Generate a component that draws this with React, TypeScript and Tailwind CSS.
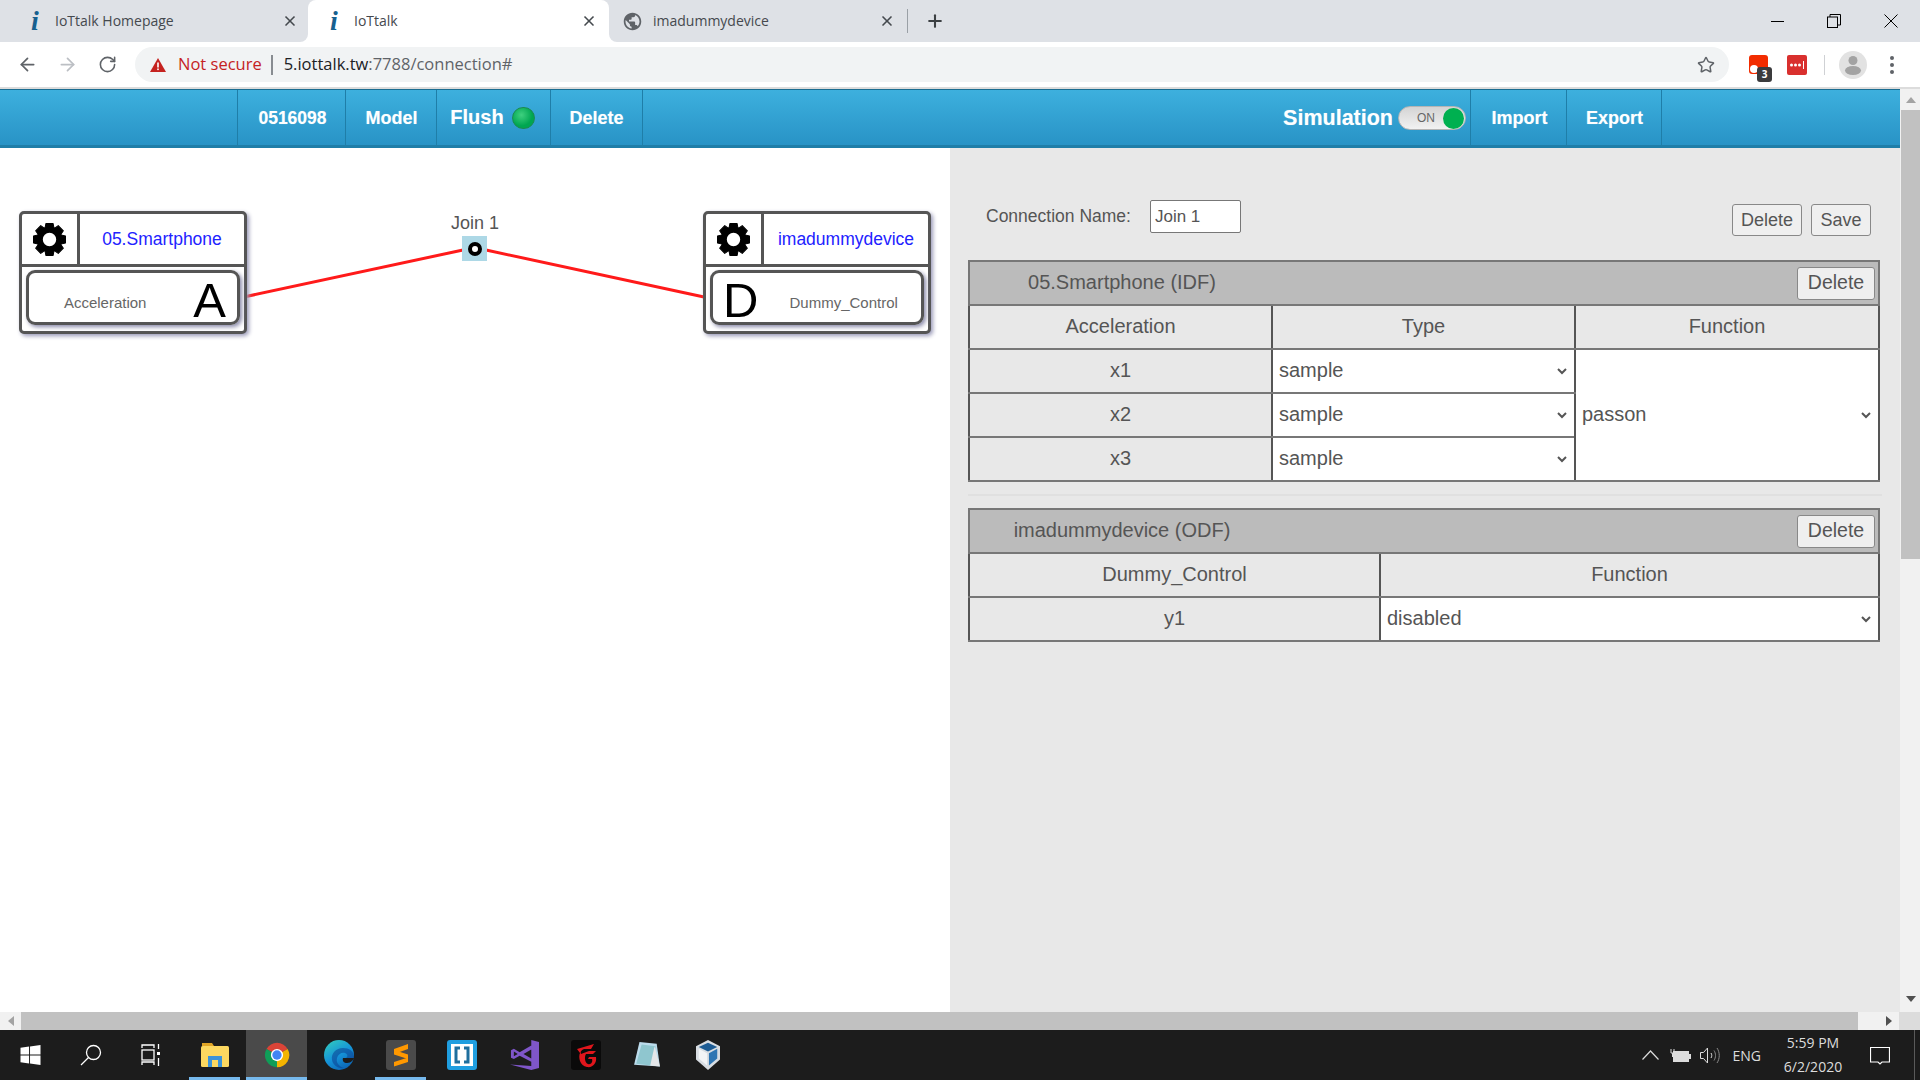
import React from 'react';
import { MdPublic } from 'react-icons/md';
import { ArrowLeft, ArrowRight, RotateCw, Star, X, Plus } from 'lucide-react';

const ChromeText = 'font-["Open_Sans",sans-serif]';

const TabFlare: React.FC<{ side: 'left' | 'right' }> = ({ side }) => (
  <span className={`absolute bottom-0 w-2 h-2 bg-white ${side === 'left' ? '-left-2' : '-right-2'}`}>
    <span className={`block w-2 h-2 bg-[#dee1e6] ${side === 'left' ? 'rounded-br-lg' : 'rounded-bl-lg'}`} />
  </span>
);

const InfoIcon: React.FC = () => (
  <span className='w-[22px] text-center font-["Liberation_Serif",serif] font-bold italic text-[28px] leading-none text-[#17608f] shrink-0'>i</span>
);

const GearIcon: React.FC = () => (
  <svg width="33" height="33" viewBox="0 0 32 32">
    {[0, 45, 90, 135, 180, 225, 270, 315].map((deg) => (
      <path key={deg} d="M12.5 0.5H19.5L20.5 6H11.5Z" fill="#000" stroke="#000" strokeLinejoin="round" transform={`rotate(${deg} 16 16)`} />
    ))}
    <circle cx="16" cy="16" r="9.5" fill="none" stroke="#000" strokeWidth="6" />
  </svg>
);

const TabBar: React.FC = () => (
  <div className={`${ChromeText} h-[42px] bg-[#dee1e6] flex items-stretch text-[14px] text-[#45494e] shrink-0`}>
    <div className="w-[308px] flex items-center pl-[24px] pr-[10px]">
      <InfoIcon />
      <span className="ml-[9px] flex-1 -mt-[1px]">IoTtalk Homepage</span>
      <X size={16} strokeWidth={2.5} className="text-[#45494e]" />
    </div>
    <div className="relative w-[301px] bg-white rounded-t-lg flex items-center pl-[15px] pr-[12px]">
      <TabFlare side="left" />
      <InfoIcon />
      <span className="ml-[9px] flex-1 -mt-[1px]">IoTtalk</span>
      <X size={16} strokeWidth={2.5} className="text-[#45494e]" />
      <TabFlare side="right" />
    </div>
    <div className="w-[298px] flex items-center pl-[12px] pr-[12px]">
      <span className="w-[22px] flex justify-center shrink-0">
        <MdPublic size={21} className="text-[#5f6368]" />
      </span>
      <span className="ml-[10px] flex-1 -mt-[1px]">imadummydevice</span>
      <X size={16} strokeWidth={2.5} className="text-[#45494e]" />
    </div>
    <div className="w-px h-[24px] self-center bg-[#9aa0a6]" />
    <div className="ml-[17px] flex items-center">
      <Plus size={20} strokeWidth={2.5} className="text-[#3c4043]" />
    </div>
    <div className="ml-auto flex items-center text-black">
      <div className="w-[56px] pr-[2px] flex justify-center">
        <div className="w-[13px] h-px bg-black" />
      </div>
      <div className="w-[56px] flex justify-center">
        <svg width="14" height="14" viewBox="0 0 14 14" fill="none" stroke="#000" strokeWidth="1">
          <rect x="0.5" y="3" width="10" height="10.5" />
          <path d="M3 3V0.5H13.5V11H10.5" />
        </svg>
      </div>
      <div className="w-[58px] pr-[1px] flex justify-center">
        <svg width="14" height="14" viewBox="0 0 14 14" stroke="#000" strokeWidth="1">
          <path d="M0.5 0.5L13.5 13.5M13.5 0.5L0.5 13.5" />
        </svg>
      </div>
    </div>
  </div>
);

const Toolbar: React.FC = () => (
  <div className={`${ChromeText} h-[47px] bg-white border-b-2 border-[#dcdcdc] flex items-center pl-[7px] shrink-0`}>
    <div className="w-[40px] flex justify-center"><ArrowLeft size={21} strokeWidth={2} className="text-[#5f6368]" /></div>
    <div className="w-[40px] flex justify-center"><ArrowRight size={21} strokeWidth={2} className="text-[#bcbfc4]" /></div>
    <div className="w-[41px] flex justify-center"><RotateCw size={19} strokeWidth={2} className="text-[#5f6368]" /></div>
    <div className="ml-[7px] w-[1594px] h-[35px] rounded-full bg-[#f1f3f4] flex items-center pl-[15px] pr-[14px] text-[16.5px]">
      <svg width="16" height="14" viewBox="0 0 16 14">
        <path d="M8 0L16 14H0Z" fill="#c5221f" />
        <rect x="7.2" y="4.5" width="1.6" height="5" fill="#fff" />
        <rect x="7.2" y="10.5" width="1.6" height="1.6" fill="#fff" />
      </svg>
      <span className="ml-[12px] text-[#c5221f]">Not secure</span>
      <span className="ml-[9px] w-[2px] h-[20px] bg-[#888c91]" />
      <span className="ml-[11px] text-[#202124]">5.iottalk.tw<span className="text-[#5f6368]">:7788/connection#</span></span>
      <Star size={18} strokeWidth={2} className="ml-auto text-[#5f6368]" />
    </div>
    <div className="relative ml-[9px] w-[40px] flex justify-center">
      <svg width="19" height="19" viewBox="0 0 19 19">
        <rect width="19" height="19" rx="3" fill="#f22c00" />
        <circle cx="5" cy="14" r="4" fill="#fff" />
      </svg>
      <span className='absolute left-[19px] top-[12px] w-[15px] h-[15px] rounded-[3px] bg-[#3b3b3d] text-white text-[10px] font-bold leading-[15px] text-center'>3</span>
    </div>
    <div className="w-[38px] flex justify-center">
      <svg width="20" height="20" viewBox="0 0 20 20">
        <rect width="20" height="20" rx="2" fill="#d9302e" />
        <circle cx="4.5" cy="10" r="1.5" fill="#fff" />
        <circle cx="8.5" cy="10" r="1.5" fill="#fff" />
        <circle cx="12.5" cy="10" r="1.5" fill="#fff" />
        <rect x="16" y="6" width="1" height="8" fill="#fff" />
      </svg>
    </div>
    <div className="ml-[8px] w-px h-[20px] bg-[#cfd1d4]" />
    <div className="ml-[14px] w-[28px] h-[28px] rounded-full bg-[#e2e2e2] overflow-hidden flex items-center justify-center">
      <svg width="28" height="28" viewBox="0 0 28 28">
        <circle cx="14" cy="9.5" r="4.5" fill="#a3a3a3" />
        <ellipse cx="14" cy="19.5" rx="8" ry="4.5" fill="#a3a3a3" />
      </svg>
    </div>
    <div className="ml-[23px] flex flex-col gap-[3px]">
      <span className="w-[4px] h-[4px] rounded-full bg-[#5f6368]" />
      <span className="w-[4px] h-[4px] rounded-full bg-[#5f6368]" />
      <span className="w-[4px] h-[4px] rounded-full bg-[#5f6368]" />
    </div>
  </div>
);

const NavItem: React.FC<{ width: string; children: React.ReactNode }> = ({ width, children }) => (
  <div className={`${width} h-full pt-[1px] border-r border-[#1f7ea8] flex items-center justify-center gap-[5px]`}>{children}</div>
);

const NavBar: React.FC = () => (
  <div className='h-[59px] border-t border-[#1b6d91] border-b-[3px] border-b-[#1f7ea8] bg-gradient-to-b from-[#3db0de] to-[#2893c6] flex items-stretch pl-[237px] pr-[238px] text-white font-bold text-[18px] [text-shadow:0_0_1px_rgba(255,255,255,0.4)] font-["Liberation_Sans",Arial,sans-serif] shrink-0'>
    <div className="flex h-full border-l border-[#1f7ea8]">
      <NavItem width="w-[108px]"><span className="ml-[2px] text-[17.5px]">0516098</span></NavItem>
      <NavItem width="w-[91px]"><span className="ml-[1px]">Model</span></NavItem>
      <NavItem width="w-[114px]">
        <span className="text-[20px] -mt-[3px] -ml-[2px]">Flush</span>
        <span className="ml-[3px] w-[23px] h-[22px] rounded-full border border-[#1c8a50] bg-[radial-gradient(circle_at_40%_35%,#3fd07f,#00a651_60%)]" />
      </NavItem>
      <NavItem width="w-[92px]">Delete</NavItem>
    </div>
    <div className="ml-auto flex h-full">
      <div className="flex items-center gap-[5px] pt-[1px] pr-[4px] border-r border-[#1f7ea8]">
        <span className="text-[21.5px]">Simulation</span>
        <div className="w-[68px] h-[24px] rounded-full border border-[#b5b5b5] bg-gradient-to-b from-[#d4d4d4] to-[#f2f2f2] flex items-center justify-between pl-[18px] pr-[1px]">
          <span className='text-[12px] font-normal text-[#666] [text-shadow:none]'>ON</span>
          <span className="w-[21px] h-[21px] rounded-full bg-[#00b050]" />
        </div>
      </div>
      <NavItem width="w-[96px]"><span className="ml-[2px]">Import</span></NavItem>
      <NavItem width="w-[95px]"><span className="ml-[1px]">Export</span></NavItem>
    </div>
  </div>
);

const DeviceNode: React.FC<{
  name: string;
  feature: string;
  letter: string;
  reverse?: boolean;
  className: string;
}> = ({ name, feature, letter, reverse, className }) => (
  <div className={`absolute top-[63px] w-[228px] h-[123px] border-[3px] border-[#555] rounded-[5px] bg-white shadow-[2px_2px_4px_#9a9ab8] ${className}`}>
    <div className="h-[53px] flex border-b-[3px] border-[#555]">
      <div className="w-[58px] border-r-[3px] border-[#555] flex items-center justify-center">
        <GearIcon />
      </div>
      <div className="flex-1 flex items-center justify-center text-[17.5px] text-[#2222ff]">{name}</div>
    </div>
    <div className={`ml-[4px] mt-[3px] w-[214px] h-[55px] border-[3px] border-[#555] rounded-[9px] shadow-[2px_2px_4px_#8a8aaa] flex items-center ${reverse ? 'flex-row-reverse' : ''}`}>
      <span className={`flex-1 text-center text-[15px] text-[#666] mt-[11px] ${reverse ? 'pl-[8px]' : 'pr-[12px]'}`}>{feature}</span>
      <span className={`text-[49px] leading-none mt-[5px] text-black font-["Liberation_Sans",sans-serif] ${reverse ? 'ml-[10px]' : 'mr-[11px]'}`}>{letter}</span>
    </div>
  </div>
);

const Canvas: React.FC = () => (
  <div className="relative w-[950px] h-full bg-white text-[#555]">
    <svg className="absolute inset-0" width="950" height="864">
      <line x1="246" y1="148.5" x2="463" y2="102" stroke="#ff1a1a" strokeWidth="3" />
      <line x1="486" y1="102" x2="704" y2="149" stroke="#ff1a1a" strokeWidth="3" />
    </svg>
    <DeviceNode name="05.Smartphone" feature="Acceleration" letter="A" className="left-[19px]" />
    <DeviceNode name="imadummydevice" feature="Dummy_Control" letter="D" reverse className="left-[703px]" />
    <span className="absolute left-[451px] top-[63px] text-[18px] leading-[24px]">Join 1</span>
    <div className="absolute left-[462px] top-[88px] w-[25px] h-[25px] bg-[#add8e6] flex items-center justify-center">
      <span className="w-[14px] h-[14px] rounded-full border-[4px] border-black bg-white" />
    </div>
  </div>
);

const HeaderCell = 'border-2 border-[#777] border-x-[#555] font-normal text-center h-[44px] pb-[2px]';
const BodyCell = 'border-2 border-[#777] border-x-[#555] text-center h-[44px] pb-[2px]';
const SelectCell = 'border-2 border-[#777] border-x-[#555] text-center h-[44px] bg-white p-0';
const DeleteBtn = 'rounded-[3px] border border-[#888] bg-[#efefef] text-[#555]';

const FieldSelect: React.FC<{ value: string }> = ({ value }) => (
  <select defaultValue={value} className="w-[calc(100%-4px)] h-[41px] bg-white text-[20px] text-[#555] pl-[2px] pb-[2px] block">
    <option value={value}>{value}</option>
  </select>
);

const SectionHead: React.FC<{ title: string; colSpan: number }> = ({ title, colSpan }) => (
  <tr>
    <th colSpan={colSpan} className="border-2 border-[#777] bg-[#bbb] h-[44px] p-0 font-normal">
      <div className="flex items-center justify-between pr-[3px]">
        <span className="w-[304px] text-center -mt-[2px]">{title}</span>
        <button className={`${DeleteBtn} w-[78px] h-[33px] text-[19.5px]`}>Delete</button>
      </div>
    </th>
  </tr>
);

const ConnectionPanel: React.FC = () => (
  <div className="flex-1 h-full bg-[#e8e8e8] px-[18px] pt-[52px] text-[#555] text-[20px]">
    <div className="flex items-start">
      <label className="ml-[18px] mt-[2px] text-[17.5px] leading-[28px]">Connection Name:</label>
      <input
        defaultValue="Join 1"
        className="ml-[19px] w-[91px] h-[33px] rounded-[2px] border border-[#777] bg-white pl-[4px] text-[17px] text-[#555]"
      />
      <button className={`${DeleteBtn} ml-auto mt-[4px] w-[70px] h-[32px] text-[18px]`}>Delete</button>
      <button className={`${DeleteBtn} ml-[9px] mr-[11px] mt-[4px] w-[60px] h-[32px] text-[18px]`}>Save</button>
    </div>

    <table className="mt-[24px] w-[912px] table-fixed border-collapse">
      <colgroup>
        <col className="w-[303px]" />
        <col className="w-[303px]" />
        <col />
      </colgroup>
      <tbody>
        <SectionHead title="05.Smartphone (IDF)" colSpan={3} />
        <tr>
          <th className={HeaderCell}>Acceleration</th>
          <th className={HeaderCell}>Type</th>
          <th className={HeaderCell}>Function</th>
        </tr>
        <tr>
          <td className={BodyCell}>x1</td>
          <td className={SelectCell}><FieldSelect value="sample" /></td>
          <td rowSpan={3} className={SelectCell}><FieldSelect value="passon" /></td>
        </tr>
        <tr>
          <td className={BodyCell}>x2</td>
          <td className={SelectCell}><FieldSelect value="sample" /></td>
        </tr>
        <tr>
          <td className={BodyCell}>x3</td>
          <td className={SelectCell}><FieldSelect value="sample" /></td>
        </tr>
      </tbody>
    </table>

    <hr className="mt-[12px] border-t-2 border-[#e0e0e0]" />

    <table className="mt-[12px] w-[912px] table-fixed border-collapse">
      <colgroup>
        <col className="w-[411px]" />
        <col />
      </colgroup>
      <tbody>
        <SectionHead title="imadummydevice (ODF)" colSpan={2} />
        <tr>
          <th className={HeaderCell}>Dummy_Control</th>
          <th className={HeaderCell}>Function</th>
        </tr>
        <tr>
          <td className={BodyCell}>y1</td>
          <td className={SelectCell}><FieldSelect value="disabled" /></td>
        </tr>
      </tbody>
    </table>
  </div>
);

const VerticalScrollbar: React.FC = () => (
  <div className="w-[20px] bg-[#f1f1f1] flex flex-col items-center pl-[1px]">
    <div className="h-[21px] flex items-center justify-center">
      <span className="w-0 h-0 border-x-[5px] border-x-transparent border-b-[6px] border-b-[#a3a3a3]" />
    </div>
    <div className="w-full h-[449px] bg-[#c1c1c1]" />
    <div className="mt-auto mb-[3px] h-[21px] flex items-center justify-center">
      <span className="w-0 h-0 border-x-[5px] border-x-transparent border-t-[6px] border-t-[#505050]" />
    </div>
  </div>
);

const HorizontalScrollbar: React.FC = () => (
  <div className="h-[18px] flex shrink-0">
    <div className="w-[21px] bg-[#f1f1f1] flex items-center justify-center">
      <span className="w-0 h-0 border-y-[5px] border-y-transparent border-r-[6px] border-r-[#a3a3a3]" />
    </div>
    <div className="w-[1837px] bg-[#c1c1c1]" />
    <div className="w-[41px] bg-[#f1f1f1] flex items-center justify-end pr-[7px]">
      <span className="w-0 h-0 border-y-[5px] border-y-transparent border-l-[6px] border-l-[#505050]" />
    </div>
    <div className="flex-1 bg-[#dcdcdc]" />
  </div>
);

const TaskIcon: React.FC<{ width: string; active?: boolean; focus?: boolean; children: React.ReactNode }> = ({ width, active, focus, children }) => (
  <div className={`${width} h-full relative flex items-center justify-center shrink-0 ${focus ? 'bg-[#4a4a4a]' : ''}`}>
    {children}
    {active && <span className="absolute bottom-0 left-0 right-0 h-[3px] bg-[#76b9ed]" />}
  </div>
);

const Taskbar: React.FC = () => (
  <div className='h-[50px] bg-[#1c1c1c] flex items-stretch text-white font-["Open_Sans",sans-serif] shrink-0'>
    <TaskIcon width="w-[61px]">
      <svg width="21" height="20" viewBox="0 0 21 21" fill="#fff">
        <path d="M0 3L9 1.7V10H0ZM10 1.5L21 0V10H10ZM0 11H9V19.3L0 18ZM10 11H21V21L10 19.5Z" />
      </svg>
    </TaskIcon>
    <TaskIcon width="w-[60px]">
      <svg width="22" height="22" viewBox="0 0 22 22" fill="none" stroke="#fff" strokeWidth="1.3">
        <circle cx="13.5" cy="8.5" r="7" />
        <path d="M8.5 13.5L1 21" />
      </svg>
    </TaskIcon>
    <TaskIcon width="w-[60px]">
      <svg width="20" height="22" viewBox="0 0 20 22" fill="none" stroke="#fff" strokeWidth="1.3">
        <path d="M1 4V1H13V4M1 21V18H13V21" />
        <rect x="1" y="6" width="12" height="10" />
        <rect x="16" y="8" width="3" height="3" fill="#fff" stroke="none" />
        <path d="M17.5 0V5M17.5 14V22" />
      </svg>
    </TaskIcon>
    <div className="w-[8px] shrink-0" />
    <TaskIcon width="w-[51px]" active>
      <svg width="28" height="24" viewBox="0 0 28 24">
        <path d="M1 0H11L13 3H1Z" fill="#e0a526" />
        <rect x="0" y="3" width="28" height="21" rx="1.5" fill="#fcd860" />
        <path d="M7 24V13H21V24H17V17H11V24Z" fill="#3c93d8" />
      </svg>
    </TaskIcon>
    <div className="w-[6px] shrink-0" />
    <TaskIcon width="w-[61px]" focus active>
      <svg width="28" height="28" viewBox="0 0 48 48">
        <path d="M24 24L6 13.6A21 21 0 0 1 42.2 13.5Z" fill="#db4437" />
        <path d="M24 24L42.2 13.5A21 21 0 0 1 24 45Z" fill="#f4b400" />
        <path d="M24 24L24 45A21 21 0 0 1 6 13.6Z" fill="#0f9d58" />
        <circle cx="24" cy="24" r="10.5" fill="#fff" />
        <circle cx="24" cy="24" r="8" fill="#4285f4" />
      </svg>
    </TaskIcon>
    <TaskIcon width="w-[68px] pr-[5px]">
      <svg width="30" height="30" viewBox="0 0 30 30">
        <defs>
          <linearGradient id="edgeA" x1="0.2" y1="0" x2="0.8" y2="1">
            <stop offset="0" stopColor="#2fc7c0" />
            <stop offset="0.5" stopColor="#1593d8" />
            <stop offset="1" stopColor="#0b5fb0" />
          </linearGradient>
        </defs>
        <circle cx="15" cy="15" r="15" fill="url(#edgeA)" />
        <path d="M30 17C30 11 25 8 19 8C12 8 7 13 8 20C9 25 14 29 20 28C14 26 12 22 13 18C14 14 18 12 21 13C24 14 24 17 22 18H30Z" fill="#0b3f8f" opacity="0.55" />
        <path d="M30 18H19C18 21 20 23 23 23C25 23 27 22 28 21C29 20 30 19 30 18Z" fill="#1c1c1c" />
      </svg>
    </TaskIcon>
    <TaskIcon width="w-[51px]" active>
      <svg width="30" height="30" viewBox="0 0 30 30">
        <rect width="30" height="30" rx="3" fill="#4a4a4a" />
        <path d="M8 11L22 6V11L8 16ZM8 12L22 16.5V21L8 16.5ZM8 24L22 19.5V24L8 28.5Z" fill="#ff9800" transform="translate(0 -2)" />
      </svg>
    </TaskIcon>
    <TaskIcon width="w-[72px]">
      <svg width="30" height="30" viewBox="0 0 30 30">
        <rect width="30" height="30" rx="3" fill="#1f9ee0" />
        <rect x="4" y="4" width="22" height="22" fill="#fff" />
        <path d="M13 8H9V22H13M17 8H21V22H17" fill="none" stroke="#1f6f9e" strokeWidth="3" />
      </svg>
    </TaskIcon>
    <TaskIcon width="w-[53px]">
      <svg width="29" height="30" viewBox="0 0 30 44" preserveAspectRatio="none">
        <path d="M22 0L30 3V41L22 44L0 36L22 38ZM22 8L10 18L4 13L1 15V26L4 28L10 23L22 32ZM22 14V27L14 20.5ZM4 17L8 20.5L4 24Z" fill="#7f56c9" fillRule="evenodd" />
      </svg>
    </TaskIcon>
    <TaskIcon width="w-[70px]">
      <svg width="30" height="30" viewBox="0 0 30 30">
        <rect width="30" height="30" rx="3" fill="#0a0a0a" />
        <path d="M6 9L23 4L20 9H13C10 10 9 12 10 14L18 11H25L22 14H15C13 17 14 23 17 24C20 25 22 22 21 19H17L18 17H25C26 23 22 28 16 27C9 26 7 17 9 13Z" fill="#e0161c" />
      </svg>
    </TaskIcon>
    <TaskIcon width="w-[52px]">
      <svg width="28" height="28" viewBox="0 0 26 32" preserveAspectRatio="none">
        <path d="M6 1L22 3L25 29L1 27Z" fill="#bcdcec" />
        <path d="M8 4L21 6L17 28L3 26Z" fill="#8fc6cf" />
        <path d="M20 6L25 29L16 28Z" fill="#e4e6e8" />
      </svg>
    </TaskIcon>
    <TaskIcon width="w-[70px]">
      <svg width="24" height="30" viewBox="0 0 26 34" preserveAspectRatio="none">
        <path d="M13 0L26 7V22L13 34L0 22V7Z" fill="#d8dde2" />
        <path d="M13 3L23 8L13 13L3 8Z" fill="#1d5c94" />
        <path d="M3 10L12 15V29L3 21Z" fill="#f2f4f6" />
        <path d="M23 10L14 15V29L23 21Z" fill="#2f76b3" />
      </svg>
    </TaskIcon>

    <div className="ml-auto flex items-center text-[#dcdcdc]">
      <svg width="17" height="10" viewBox="0 0 17 10" fill="none" stroke="#dcdcdc" strokeWidth="1.2">
        <path d="M0.5 9.5L8.5 1L16.5 9.5" />
      </svg>
      <svg className="ml-[11px]" width="21" height="13" viewBox="0 0 21 13" fill="none" stroke="#dcdcdc">
        <rect x="3.5" y="2.5" width="15" height="10" />
        <rect x="4" y="3" width="14" height="9" fill="#dcdcdc" />
        <rect x="19" y="5" width="2" height="5" fill="#dcdcdc" stroke="none" />
        <path d="M1 0V4H4V0M2.5 4V8" />
      </svg>
      <svg className="ml-[9px]" width="21" height="17" viewBox="0 0 21 17" fill="none" stroke="#dcdcdc">
        <path d="M0.5 5.5H3.5L7.5 1V16L3.5 11.5H0.5Z" />
        <path d="M11 6C12 7.5 12 9.5 11 11" />
        <path d="M14 3.5C16 6.5 16 10.5 14 13.5" stroke="#8a8a8a" />
        <path d="M17 1C20 5.5 20 11.5 17 16" stroke="#8a8a8a" />
      </svg>
      <span className="ml-[12px] text-[14px]">ENG</span>
      <div className="ml-[16px] w-[72px] text-[14px] leading-[24px] text-center mb-[1px]">
        <div>5:59 PM</div>
        <div>6/2/2020</div>
      </div>
      <svg className="ml-[21px]" width="20" height="20" viewBox="0 0 20 20" fill="none" stroke="#fff" strokeWidth="1.2">
        <path d="M0.5 2.5H19.5V17H12L10 19L8 17H0.5Z" />
      </svg>
      <div className="ml-[24px] w-px h-full bg-[#5a5a5a]" />
      <div className="w-[5px]" />
    </div>
  </div>
);

export default function App() {
  return (
    <div className='w-[1920px] h-[1080px] overflow-hidden flex flex-col font-["Liberation_Sans",Arial,sans-serif]'>
      <TabBar />
      <Toolbar />
      <div className="flex-1 flex min-h-0">
        <div className="w-[1900px] flex flex-col min-h-0">
          <NavBar />
          <div className="flex-1 flex min-h-0">
            <Canvas />
            <ConnectionPanel />
          </div>
        </div>
        <VerticalScrollbar />
      </div>
      <HorizontalScrollbar />
      <Taskbar />
    </div>
  );
}
